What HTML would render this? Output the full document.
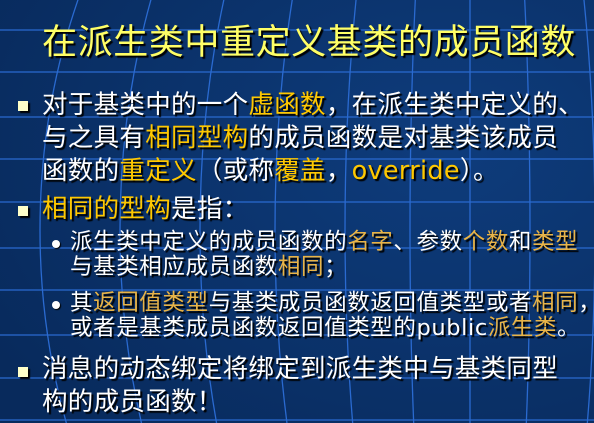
<html><head><style>
body{margin:0;width:594px;height:423px;overflow:hidden;background:#0b3470;position:relative;font-family:"DejaVu Sans","Noto Sans CJK SC",sans-serif}
svg{position:absolute;left:0;top:0}
.t{position:absolute;white-space:nowrap;color:#fff;text-shadow:2px 2px 1px #000}
.y{color:#ffc800}
.s{color:#e8b448}
.sq{position:absolute;width:10px;height:10px;background:#ffffc8;box-shadow:2px 2px 1px #000}
.dot{position:absolute;width:8px;height:8px;border-radius:50%;background:#fff;box-shadow:1px 1px 1px #000}
</style></head><body>
<svg width="594" height="423">
<defs><radialGradient id="g" cx="0.75" cy="0.35" r="0.9"><stop offset="0" stop-color="#0e3c7c"/><stop offset="1" stop-color="#082a5c"/></radialGradient></defs>
<rect width="594" height="423" fill="url(#g)"/>
<g stroke="#2a6ad0" stroke-width="1.3" fill="none">
<line x1="0" y1="30" x2="594" y2="30"/><line x1="0" y1="72" x2="594" y2="72"/><line x1="0" y1="117" x2="594" y2="117"/><line x1="0" y1="159" x2="594" y2="159"/><line x1="0" y1="202" x2="594" y2="202"/><line x1="0" y1="248" x2="594" y2="248"/><line x1="0" y1="290" x2="594" y2="290"/><line x1="0" y1="335" x2="594" y2="335"/><line x1="0" y1="378" x2="594" y2="378"/><line x1="0" y1="420" x2="594" y2="420"/>
<ellipse cx="470" cy="230" rx="520" ry="560"/>
<ellipse cx="470" cy="230" rx="430" ry="560"/>
<ellipse cx="470" cy="230" rx="350" ry="560"/>
<ellipse cx="470" cy="230" rx="270" ry="560"/>
<ellipse cx="470" cy="230" rx="195" ry="560"/>
<ellipse cx="470" cy="230" rx="125" ry="560"/>
<ellipse cx="470" cy="230" rx="60" ry="560"/>
<line x1="470" y1="0" x2="470" y2="423"/>
</g></svg>
<div class="t" style="left:42px;top:14px;font-size:35px;letter-spacing:0.6px;color:#ffff66;font-family:'Noto Sans CJK SC',sans-serif">在派生类中重定义基类的成员函数</div>
<div class="sq" style="left:18px;top:101px"></div>
<div class="t" style="left:42px;top:89px;font-size:25.5px;line-height:33px;letter-spacing:0.3px">对于基类中的一个<span class="y">虚函数</span>，在派生类中定义的、<br>与之具有<span class="y">相同型构</span>的成员函数是对基类该成员<br>函数的<span class="y">重定义</span>（或称<span class="y">覆盖</span>，<span class="y">override</span>）。</div>
<div class="sq" style="left:18px;top:206px"></div>
<div class="t y" style="left:42px;top:193px;font-size:25.5px;line-height:33px;letter-spacing:0.3px">相同的型构<span style="color:#fff">是指：</span></div>
<div class="dot" style="left:52px;top:240px"></div>
<div class="t" style="left:70px;top:230px;font-size:22.5px;line-height:25px;letter-spacing:0.6px">派生类中定义的成员函数的<span class="s">名字</span>、参数<span class="s">个数</span>和<span class="s">类型</span><br>与基类相应成员函数<span class="s">相同</span>；</div>
<div class="dot" style="left:52px;top:301px"></div>
<div class="t" style="left:70px;top:291px;font-size:22.5px;line-height:25px;letter-spacing:0.6px">其<span class="s">返回值类型</span>与基类成员函数返回值类型或者<span class="s">相同</span>，<br>或者是基类成员函数返回值类型的public<span class="s">派生类</span>。</div>
<div class="sq" style="left:18px;top:367px"></div>
<div class="t" style="left:42px;top:353px;font-size:25.5px;line-height:33px;letter-spacing:0.3px">消息的动态绑定将绑定到派生类中与基类同型<br>构的成员函数！</div>
</body></html>
